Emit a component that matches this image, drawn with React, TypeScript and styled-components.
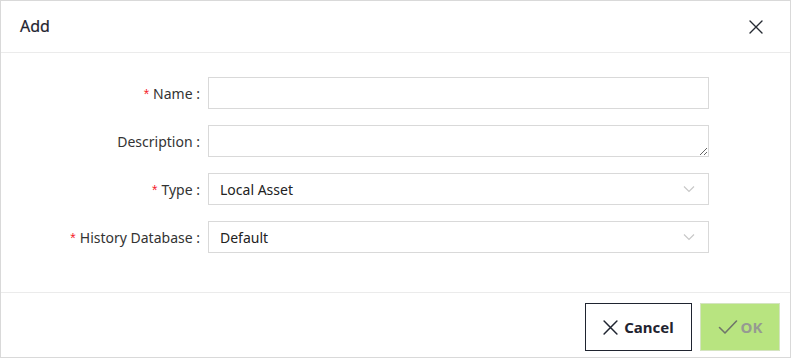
import React from "react";
import styled, {createGlobalStyle} from "styled-components";

const GlobalStyle = createGlobalStyle`
  body {
    margin: 0;
    background: #ffffff;
    font-family: "Noto Sans", "Open Sans", sans-serif;
  }
`

const CloseIcon = ({size = 14}: {size?: number}) => (
	<svg width={size} height={size} viewBox="0 0 14 14" fill="none">
		<path d="M1 1L13 13M13 1L1 13" stroke="currentColor" strokeWidth="1.4" strokeLinecap="round"/>
	</svg>
)

const CheckIcon = () => (
	<svg width="20" height="16" viewBox="0 0 20 16" fill="none">
		<path d="M1.5 8.5L7 14L18.5 2" stroke="currentColor" strokeWidth="1.6" strokeLinecap="round" strokeLinejoin="round"/>
	</svg>
)

const Chevron = () => (
	<svg width="12" height="8" viewBox="0 0 12 8" fill="none">
		<path d="M1 1.5L6 6.5L11 1.5" stroke="#c8c8c8" strokeWidth="1.2"/>
	</svg>
)

type FieldProps = { label: string, required?: boolean, children: React.ReactNode }

const Field = ({label, required, children}: FieldProps) => (
	<>
		<Label>{required && <Star>*</Star>}{label} :</Label>
		{children}
	</>
)

const App = () => {
	return (
		<Modal>
			<GlobalStyle/>
			<Header>
				<Title>Add</Title>
				<CloseButton><CloseIcon/></CloseButton>
			</Header>
			<Body>
				<FormGrid>
					<Field label="Name" required>
						<TextInput/>
					</Field>
					<Field label="Description">
						<TextArea/>
					</Field>
					<Field label="Type" required>
						<Select>
							<span>Local Asset</span>
							<Chevron/>
						</Select>
					</Field>
					<Field label="History Database" required>
						<Select>
							<span>Default</span>
							<Chevron/>
						</Select>
					</Field>
				</FormGrid>
			</Body>
			<Footer>
				<CancelButton><CloseIcon size={15}/>Cancel</CancelButton>
				<OkButton disabled><CheckIcon/>OK</OkButton>
			</Footer>
		</Modal>
	)
}

export default App


const Modal = styled.div`
  box-sizing: border-box;
  width: 791px;
  height: 358px;
  border: 1px solid #d9d9d9;
  display: flex;
  flex-direction: column;
  background: #fff;
`

const Header = styled.div`
  height: 51px;
  border-bottom: 1px solid #ebebeb;
  display: flex;
  align-items: center;
  justify-content: space-between;
  padding: 0 20px 0 19px;
  flex-shrink: 0;
`

const Title = styled.div`
  font-size: 16px;
  font-weight: 400;
  color: #1f2430;
  padding-bottom: 2px;
  -webkit-text-stroke: 0.2px #1f2430;
`

const CloseButton = styled.button`
  background: none;
  border: none;
  padding: 0;
  display: flex;
  color: #262b33;
  cursor: pointer;
  margin-right: 7px;
`

const Body = styled.div`
  height: 240px;
  border-bottom: 1px solid #ebebeb;
  padding-top: 24px;
  box-sizing: border-box;
  flex-shrink: 0;
`

const FormGrid = styled.div`
  display: grid;
  grid-template-columns: 199px 501px;
  column-gap: 8px;
  row-gap: 16px;
  align-items: center;
`

const Label = styled.label`
  text-align: right;
  font-size: 14px;
  color: #333;
  white-space: nowrap;
`

const Star = styled.span`
  color: #f5222d;
  margin-right: 4px;
  font-family: SimSun, "Liberation Sans", sans-serif;
`

const inputBase = `
  box-sizing: border-box;
  height: 32px;
  width: 501px;
  border: 1px solid #d9d9d9;
  background: #fff;
  font-family: "Noto Sans", sans-serif;
  font-size: 14px;
  color: #222;
  padding: 0 11px;
  outline: none;
  margin: 0;
`

const TextInput = styled.input`
  ${inputBase}
`

const TextArea = styled.textarea`
  ${inputBase}
  display: block;
  min-height: 32px;
  resize: vertical;
  padding-top: 4px;
`

const Select = styled.div`
  ${inputBase}
  display: flex;
  align-items: center;
  justify-content: space-between;
  padding-right: 13px;
`

const Footer = styled.div`
  flex: 1;
  display: flex;
  justify-content: flex-end;
  align-items: flex-start;
  gap: 8px;
  padding: 10px 10px 0 0;
`

const ButtonBase = styled.button`
  box-sizing: border-box;
  height: 48px;
  display: flex;
  align-items: center;
  justify-content: center;
  gap: 6px;
  font-family: "Noto Sans", sans-serif;
  font-size: 15px;
  font-weight: 700;
  cursor: pointer;
`

const CancelButton = styled(ButtonBase)`
  width: 107px;
  border: 1px solid #1f2430;
  background: #fff;
  color: #1f2430;
`

const OkButton = styled(ButtonBase)`
  width: 80px;
  border: 1px solid #d4e4c0;
  background: #b8e480;
  color: #969a92;
  gap: 3px;
  cursor: not-allowed;

  svg {
    color: #6f756a;
  }
`
